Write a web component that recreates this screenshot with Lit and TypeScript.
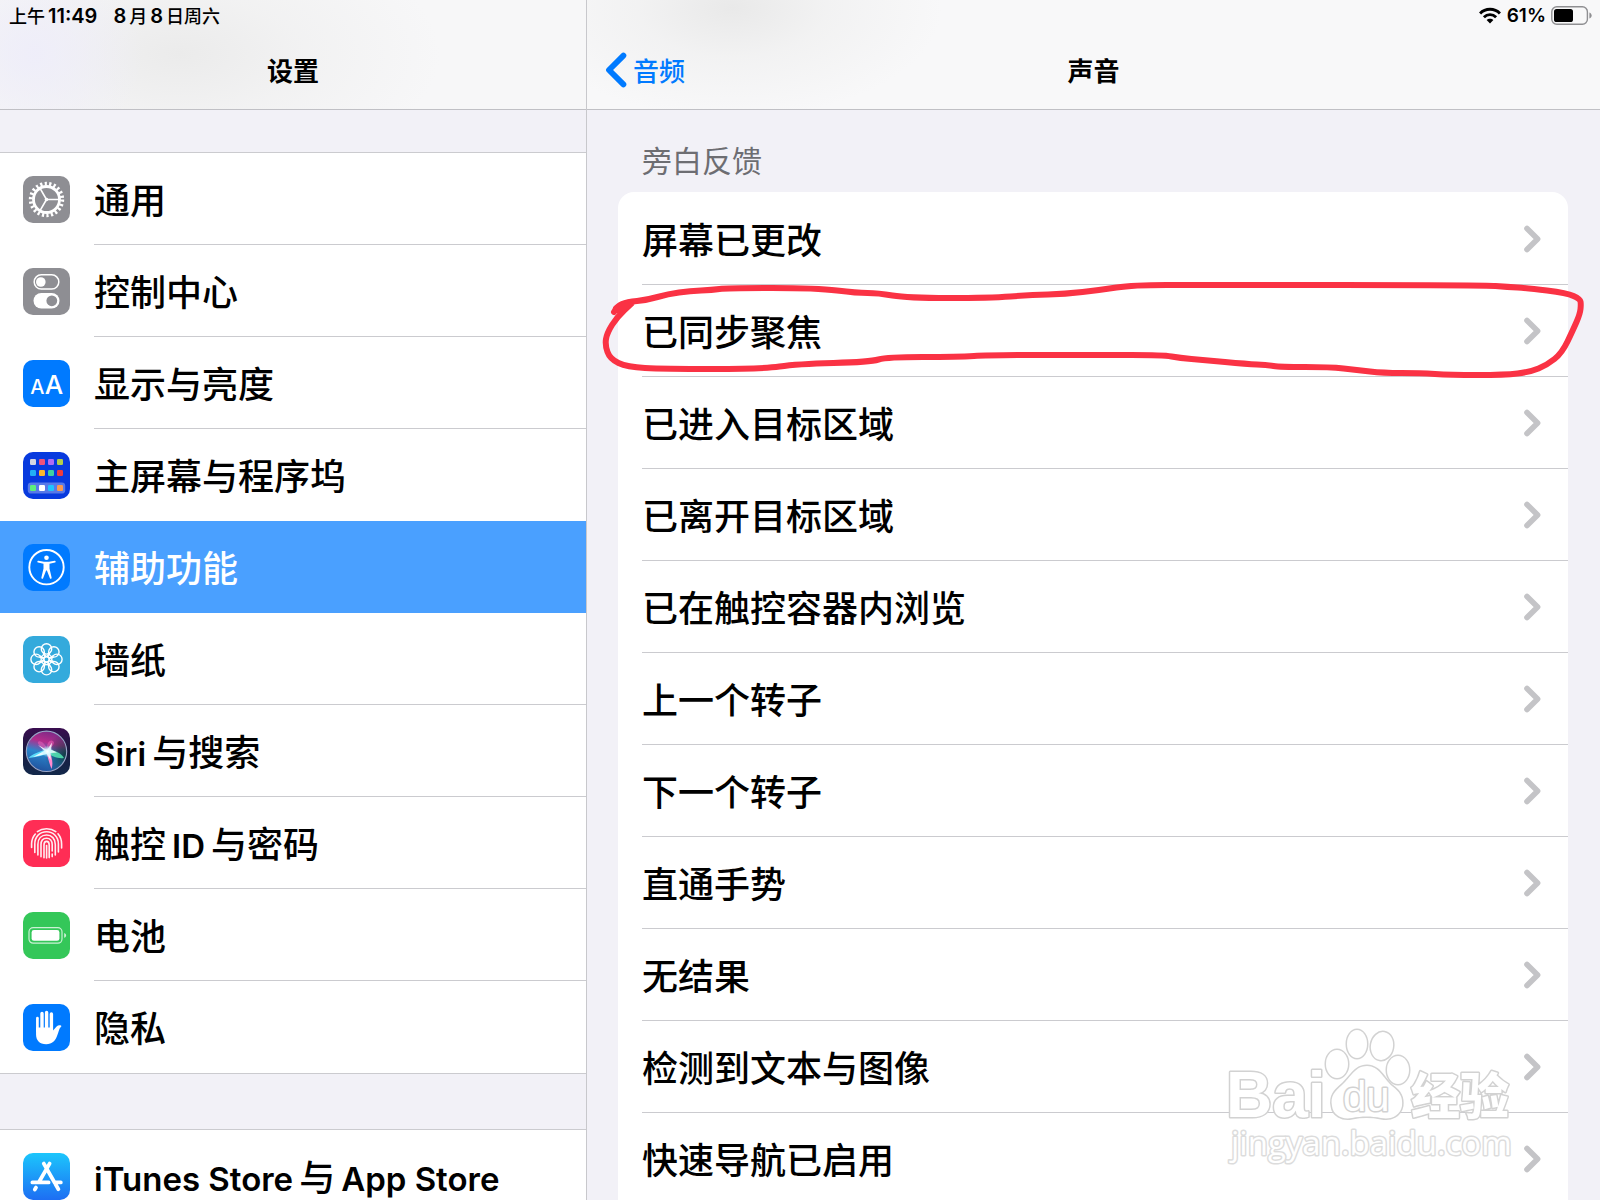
import { LitElement, html, svg, css, nothing } from "lit";
import type { SVGTemplateResult, TemplateResult } from "lit";
import { customElement, property, state } from "lit/decorators.js";
import { classMap } from "lit/directives/class-map.js";

type Point = [number, number];

/** Smooth path that runs through the midpoints of a list of points. */
function strokePath(points: Point[]): string {
  let d = `M${points[0][0]} ${points[0][1]}`;
  for (let i = 1; i < points.length - 1; i++) {
    const [x, y] = points[i];
    const [nx, ny] = points[i + 1];
    d += ` Q${x} ${y} ${(x + nx) / 2} ${(y + ny) / 2}`;
  }
  const last = points[points.length - 1];
  return `${d} L${last[0]} ${last[1]}`;
}

const MARKER: Point[] = [
  [614, 312], [617, 306], [627, 302], [647, 300], [668, 294], [690, 291], [712, 290], [727, 288],
  [817, 288], [857, 293], [878, 293], [907, 298], [990, 298], [1031, 295], [1065, 294], [1100, 290],
  [1133, 285], [1200, 285], [1483, 285], [1508, 287], [1527, 288], [1567, 293], [1580, 299],
  [1581, 304], [1580, 314], [1573, 330], [1562, 353], [1547, 365], [1530, 372], [1505, 375],
  [1450, 375], [1420, 373], [1383, 373], [1357, 370], [1330, 367], [1280, 367], [1267, 365],
  [1247, 364], [1203, 360], [1180, 358], [1163, 355], [1100, 355], [990, 355], [958, 357],
  [887, 357], [870, 362], [797, 364], [762, 369], [663, 369], [627, 367], [610, 359], [605, 345],
  [607, 333], [617, 317], [632, 303],
];

const range = (n: number) => Array.from({ length: n }, (_, i) => i);

const HOME_DOTS: [number, number, string][] = [
  [10, 10, "#d6d6e2"], [19, 10, "#f0527a"], [28, 10, "#b06cf5"], [37, 10, "#b2cf4a"],
  [10, 21, "#22b0f5"], [19, 21, "#fcb92c"], [28, 21, "#3fd0a0"], [37, 21, "#f03c3c"],
  [10, 36, "#5df07c"], [19, 36, "#ffffff"], [28, 36, "#1fc4ff"], [37, 36, "#fb9a50"],
];

const ICONS: Record<string, SVGTemplateResult> = {
  general: svg`
    <rect width="47" height="47" rx="10" fill="#8e8e93"/>
    <g fill="none" stroke="#fff">
      <circle cx="23.5" cy="23.5" r="13" stroke-width="2.8"/>
      <circle cx="23.5" cy="23.5" r="15.8" stroke-width="3.8" stroke-dasharray="2.2 2.31"/>
      <path d="M23.5 23.5H36M23.5 23.5L17.2 12.6M23.5 23.5L17.2 34.4" stroke-width="1.6"/>
    </g>
    <circle cx="23.5" cy="23.5" r="1.8" fill="#fff"/>`,
  control: svg`
    <rect width="47" height="47" rx="10" fill="#8e8e93"/>
    <rect x="11.2" y="6.8" width="24.6" height="14.2" rx="7.1" fill="none" stroke="#fff" stroke-width="1.5"/>
    <circle cx="17.8" cy="14" r="4.8" fill="#fff"/>
    <rect x="10.5" y="25" width="26" height="15.6" rx="7.8" fill="#fff"/>
    <circle cx="28.8" cy="32.8" r="5.4" fill="#8e8e93"/>`,
  display: svg`
    <rect width="47" height="47" rx="10" fill="#007aff"/>
    <g fill="#fff" font-family="Inter, sans-serif" font-weight="500" text-anchor="middle">
      <text x="14.3" y="33.6" font-size="20">A</text>
      <text x="31" y="33.6" font-size="26">A</text>
    </g>`,
  home: svg`
    <rect width="47" height="47" rx="10" fill="#083ade"/>
    <rect x="4.8" y="30.4" width="37.4" height="11.2" rx="3.4" fill="#fff" opacity=".32"/>
    ${HOME_DOTS.map(([x, y, c]) => svg`<rect x=${x - 3} y=${y - 3} width="6" height="6" rx="1.2" fill=${c}/>`)}`,
  access: svg`
    <rect width="47" height="47" rx="10" fill="#007aff"/>
    <circle cx="23.5" cy="23.2" r="17.2" fill="none" stroke="#fff" stroke-width="1.9"/>
    <circle cx="23.5" cy="13.8" r="2.3" fill="#fff"/>
    <path fill="#fff" d="M15.3 16.8L21 17.8H26L31.7 16.8A.8.8 0 0 1 32 18.4L26.5 19.8V24.5L28.6 33.6A.9.9 0 0 1 26.9 34.2L23.9 26.6H23.1L20.1 34.2A.9.9 0 0 1 18.4 33.6L20.5 24.5V19.8L15 18.4A.8.8 0 0 1 15.3 16.8Z"/>`,
  wallpaper: svg`
    <rect width="47" height="47" rx="10" fill="#34aadc"/>
    <g fill="none" stroke="#fff" stroke-width="1.4">
      ${range(8).map((i) => svg`
        <g transform="rotate(${i * 45} 23.5 23.3)">
          <circle cx="23.5" cy="12.9" r="5.2"/>
          <path d="M23.5 20.6C21.4 19.4 20.4 17.6 20.2 16.6M23.5 20.6C25.6 19.4 26.6 17.6 26.8 16.6"/>
        </g>`)}
      <circle cx="23.5" cy="23.3" r="2.6"/>
    </g>`,
  siri: svg`
    <defs>
      <linearGradient id="siri-bg" x1="0" y1="0" x2="0" y2="1">
        <stop offset="0" stop-color="#3a0d50"/><stop offset=".45" stop-color="#1b1a40"/><stop offset="1" stop-color="#12284a"/>
      </linearGradient>
      <linearGradient id="siri-orb" x1=".6" y1="0" x2=".35" y2="1">
        <stop offset="0" stop-color="#7c2a86"/><stop offset=".28" stop-color="#b42c8c"/>
        <stop offset=".55" stop-color="#2a86cc"/><stop offset="1" stop-color="#20509c"/>
      </linearGradient>
      <radialGradient id="siri-right" cx="1" cy=".6" r=".55">
        <stop offset="0" stop-color="#0c3a40"/><stop offset="1" stop-color="#0c3a40" stop-opacity="0"/>
      </radialGradient>
      <radialGradient id="siri-glow">
        <stop offset="0" stop-color="#fff"/><stop offset=".4" stop-color="#d8fbff" stop-opacity=".8"/>
        <stop offset="1" stop-color="#8fe8ff" stop-opacity="0"/>
      </radialGradient>
    </defs>
    <rect width="47" height="47" rx="10" fill="url(#siri-bg)"/>
    <circle cx="23.5" cy="23.3" r="20" fill="url(#siri-orb)"/>
    <circle cx="23.5" cy="23.3" r="20" fill="url(#siri-right)"/>
    <circle cx="23.5" cy="23.3" r="20.2" fill="none" stroke="#9aa6c8" stroke-width="1.1"/>
    <path fill="#e75ab4" opacity=".6" d="M24 23C18 20 13 15 15.5 13.5S24 17 24 23ZM24 23C23 15 27 11 30 13S28 20 24 23Z"/>
    <path fill="#5fe6ff" opacity=".9" d="M24 22C17 23 9 26 5.5 30C13 29 20 28 25 25Z"/>
    <path fill="#56e8b4" opacity=".85" d="M25 22C32 22 38 25 41 30C35 31 28 28 24 25Z"/>
    <path fill="#ff8ad0" d="M23 24C25 29 26 35 28.5 41C30.5 36 29 28 26 23Z"/>
    <path fill="#fff" opacity=".85" d="M24 22L29 14.5L28 21.6L34 24.6L27.4 25L27.6 32L23.8 26L10 29L21.5 22.8L15 17Z"/>
    <circle cx="24.4" cy="23.4" r="6" fill="url(#siri-glow)"/>`,
  touch: svg`
    <rect width="47" height="47" rx="10" fill="#ff2d55"/>
    <g fill="none" stroke="#fff" stroke-width="1.6" stroke-linecap="round" opacity=".92">
      <path d="M14.4 11.6C19.6 7.8 27.6 7.8 32.8 11.6"/>
      <path d="M8.6 27.5V23.5C8.8 19.6 10.2 16.4 12.3 14"/>
      <path d="M35 13.8C37.4 16.6 38.6 20 38.6 24V28"/>
      <path d="M11.8 32.4V24C11.8 16.6 16.8 11.8 23.6 11.8S35.4 17 35.4 24V32"/>
      <path d="M14.9 35V24.4C14.9 18.6 18.4 15 23.6 15S32.3 18.8 32.3 24.4V35"/>
      <path d="M18 36.8V24.6C18 20.6 20.2 18.2 23.6 18.2S29.2 20.8 29.2 24.6V31M29.2 34V36.6"/>
      <path d="M21 37.8V25C21 22.6 22 21.4 23.6 21.4S26.2 22.6 26.2 25V37.6"/>
      <path d="M23.6 25.6V38"/>
    </g>`,
  battery: svg`
    <rect width="47" height="47" rx="10" fill="#34c759"/>
    <rect x="6" y="15.6" width="33" height="15.6" rx="4.2" fill="none" stroke="#fff" stroke-width="1.2" opacity=".75"/>
    <rect x="8.6" y="18" width="27.8" height="10.8" rx="2.4" fill="#fff"/>
    <path d="M41.2 21C43.8 21.8 43.8 25 41.2 25.8Z" fill="#fff" opacity=".75"/>`,
  privacy: svg`
    <rect width="47" height="47" rx="10" fill="#007aff"/>
    <g stroke="#fff" stroke-linecap="round" fill="none">
      <path d="M14.4 14.2V27" stroke-width="2.7"/>
      <path d="M19 9.4V26M23.6 8.4V26M28.4 10V26" stroke-width="3.4"/>
    </g>
    <path fill="#fff" d="M13.05 23.5H30V26.4C31.4 25.4 32.4 23.6 33.6 22.4C35 21.2 37 21 38.2 21.8C38.6 22.2 38.2 22.8 37.6 23.2C36.2 24.4 35.4 28.4 34.2 31.6C32.6 36.6 29.2 40.2 23.2 40.2C16.4 40.2 13.05 36 13.05 30.4Z"/>`,
  store: svg`
    <defs>
      <linearGradient id="store-bg" x1="0" y1="0" x2="0" y2="1">
        <stop offset="0" stop-color="#1cc6fc"/><stop offset="1" stop-color="#1d6ef3"/>
      </linearGradient>
    </defs>
    <rect width="47" height="47" rx="10" fill="url(#store-bg)"/>
    <path d="M26.6 10.6L16 29M20.8 10.6L35.4 36.2M9.4 29.4H25.6M31.6 29.4H37.8M13 34.6L11.8 36.6" fill="none" stroke="#fff" stroke-width="3.8" stroke-linecap="round"/>`,
};

interface NavItem {
  icon: string;
  label: string;
}

const GROUPS: NavItem[][] = [
  [
    { icon: "general", label: "通用" },
    { icon: "control", label: "控制中心" },
    { icon: "display", label: "显示与亮度" },
    { icon: "home", label: "主屏幕与程序坞" },
    { icon: "access", label: "辅助功能" },
    { icon: "wallpaper", label: "墙纸" },
    { icon: "siri", label: "Siri与搜索" },
    { icon: "touch", label: "触控ID与密码" },
    { icon: "battery", label: "电池" },
    { icon: "privacy", label: "隐私" },
  ],
  [{ icon: "store", label: "iTunes Store与App Store" }],
];

const SOUNDS = [
  "屏幕已更改", "已同步聚焦", "已进入目标区域", "已离开目标区域", "已在触控容器内浏览",
  "上一个转子", "下一个转子", "直通手势", "无结果", "检测到文本与图像", "快速导航已启用",
];

/** Splits a label so that Latin runs get their own size and weight. */
function mixed(label: string): (TemplateResult | string)[] {
  return label
    .split(/([A-Za-z][A-Za-z ]*)/)
    .map((s, i) => (i % 2 ? html`<span class=${classMap({ latin: true, lead: label.startsWith(s) })}>${s}</span>` : s));
}

const shared = css`
  :host {
    font-family: Inter, "Noto Sans CJK SC", sans-serif;
    color: #000;
  }
  * {
    box-sizing: border-box;
  }
  button {
    font: inherit;
    color: inherit;
    background: none;
    border: 0;
    padding: 0;
    text-align: left;
    cursor: pointer;
  }
  ul {
    list-style: none;
    margin: 0;
    padding: 0;
  }
  h1,
  h2 {
    margin: 0;
  }
  h1 {
    padding-bottom: 2px;
    font-size: 26px;
    font-weight: 700;
  }
`;

@customElement("settings-row")
class SettingsRow extends LitElement {
  @property() icon = "";
  @property() label = "";
  @property({ type: Boolean }) selected = false;

  static styles = [
    shared,
    css`
      :host {
        display: block;
      }
      .row {
        display: flex;
        align-items: center;
        width: 100%;
        height: 92px;
        padding-left: 23px;
        gap: 24px;
      }
      .icon {
        flex: none;
        width: 47px;
        height: 47px;
      }
      .label {
        flex: 1;
        align-self: stretch;
        display: flex;
        align-items: center;
        padding-bottom: 2px;
        font-size: 36px;
        font-weight: 500;
        white-space: nowrap;
        border-bottom: 1px solid #cbcbcf;
      }
      .latin {
        margin: 0 6px;
        font-size: 33px;
        font-weight: 600;
      }
      .lead {
        margin-left: 0;
      }
      .selected {
        background: #4aa0ff;
        color: #fff;
      }
      :host([flush]) .label,
      .selected .label {
        border-bottom-color: transparent;
      }
    `,
  ];

  render() {
    return html`
      <button class=${classMap({ row: true, selected: this.selected })} aria-current=${this.selected ? "page" : nothing}>
        <svg class="icon" viewBox="0 0 47 47" aria-hidden="true">${ICONS[this.icon]}</svg>
        <span class="label"><span>${mixed(this.label)}</span></span>
      </button>
    `;
  }
}

@customElement("settings-sidebar")
class SettingsSidebar extends LitElement {
  @state() private current = "access";

  static styles = [
    shared,
    css`
      :host {
        display: flex;
        flex-direction: column;
        min-width: 0;
        min-height: 0;
        border-right: 1px solid #c8c8cc;
        background: #f2f1f7;
      }
      .head {
        flex: none;
        border-bottom: 1px solid #c0c0c5;
        background:
          radial-gradient(ellipse 110px 100px at 34px 54px, rgba(238, 237, 250, 0.9), rgba(238, 237, 250, 0.5) 45%, rgba(238, 237, 250, 0)),
          radial-gradient(ellipse 260px 130px at 180px 54px, #ebebeb, rgba(238, 238, 238, 0.6) 45%, rgba(247, 247, 248, 0)),
          #f7f7f8;
      }
      .status {
        display: flex;
        align-items: center;
        height: 31px;
        padding: 0 0 2px 9px;
        gap: 16px;
        font-size: 20px;
        font-weight: 600;
      }
      .status > span {
        display: flex;
        align-items: baseline;
        gap: 3px;
      }
      .cjk {
        font-size: 18px;
        font-weight: 500;
      }
      .bar {
        display: flex;
        align-items: center;
        justify-content: center;
        height: 78px;
      }
      .groups {
        flex: 1;
        min-height: 0;
        overflow: hidden;
        display: flex;
        flex-direction: column;
        gap: 55px;
        padding-top: 42px;
      }
      .group {
        flex: none;
        background: #fff;
        border-top: 1px solid #cbcbcf;
        border-bottom: 1px solid #cbcbcf;
      }
    `,
  ];

  render() {
    return html`
      <header class="head">
        <div class="status">
          <span><span class="cjk">上午</span><span>11:49</span></span>
          <span><span>8</span><span class="cjk">月</span><span>8</span><span class="cjk">日周六</span></span>
        </div>
        <div class="bar"><h1>设置</h1></div>
      </header>
      <nav class="groups" aria-label="设置">
        ${GROUPS.map(
          (items) => html`
            <ul class="group">
              ${items.map(
                (item, i) => html`
                  <li>
                    <settings-row
                      icon=${item.icon}
                      label=${item.label}
                      ?selected=${item.icon === this.current}
                      ?flush=${i === items.length - 1 || items[i + 1].icon === this.current}
                      @click=${() => (this.current = item.icon)}
                    ></settings-row>
                  </li>
                `,
              )}
            </ul>
          `,
        )}
      </nav>
    `;
  }
}

@customElement("sound-pane")
class SoundPane extends LitElement {
  static styles = [
    shared,
    css`
      :host {
        display: flex;
        flex-direction: column;
        min-width: 0;
        min-height: 0;
        background: #f2f1f7;
      }
      .head {
        flex: none;
        border-bottom: 1px solid #c0c0c5;
        background:
          radial-gradient(ellipse 210px 110px at 145px 8px, #e9e9e9, rgba(238, 238, 238, 0.6) 45%, rgba(248, 248, 249, 0)),
          #f8f8f9;
      }
      .status {
        display: flex;
        align-items: center;
        justify-content: flex-end;
        height: 31px;
        padding-right: 8px;
        gap: 5px;
        font-size: 19px;
        font-weight: 600;
      }
      .wifi {
        width: 24px;
        height: 17px;
      }
      .cell {
        width: 41px;
        height: 19px;
      }
      .bar {
        display: grid;
        grid-template-columns: 1fr auto 1fr;
        align-items: center;
        height: 78px;
        padding: 0 18px;
      }
      .back {
        display: flex;
        align-items: center;
        gap: 6px;
        color: #007aff;
        font-size: 26px;
        font-weight: 500;
        text-decoration: none;
      }
      .back span {
        padding-bottom: 2px;
      }
      .back svg {
        width: 22px;
        height: 36px;
      }
      .body {
        flex: 1;
        min-height: 0;
        overflow: hidden;
        padding: 29px 32px 0 31px;
      }
      h2 {
        padding-left: 24px;
        font-size: 30px;
        line-height: 44px;
        font-weight: 400;
        color: #6d6d72;
      }
      .card {
        margin-top: 9px;
        padding: 1px 0 24px;
        border-radius: 16px;
        background: #fff;
      }
      .item {
        position: relative;
        padding-left: 24px;
      }
      .row {
        display: flex;
        align-items: center;
        justify-content: space-between;
        width: 100%;
        height: 92px;
        padding-right: 25px;
        font-size: 36px;
        font-weight: 500;
        border-bottom: 1px solid #cbcbcf;
      }
      .name {
        padding-bottom: 2px;
      }
      .chevron {
        flex: none;
        width: 20px;
        height: 30px;
      }
      .marker {
        position: absolute;
        z-index: 1;
        left: -18px;
        top: -10px;
        width: calc(100% + 36px);
        height: 112px;
        overflow: visible;
        pointer-events: none;
      }
    `,
  ];

  render() {
    return html`
      <header class="head">
        <div class="status">
          <svg class="wifi" viewBox="0 0 24 17" role="img" aria-label="Wi-Fi">
            <g fill="none" stroke="#000" stroke-width="2.9">
              <path d="M2.1 6.4C7.4 .8 16.6 .8 21.9 6.4"/>
              <path d="M5.9 10.2C9.3 6.8 14.7 6.8 18.1 10.2"/>
            </g>
            <path d="M8.6 12.9C10.4 11.2 13.6 11.2 15.4 12.9L12 16.4Z"/>
          </svg>
          <span>61%</span>
          <svg class="cell" viewBox="0 0 41 19" aria-hidden="true">
            <rect x=".8" y=".8" width="35.6" height="17.4" rx="5" fill="none" stroke="#8f8f92" stroke-width="1.4"/>
            <rect x="3" y="3" width="19" height="13" rx="2.6"/>
            <path d="M38.4 6.4C41.4 7.4 41.4 11.6 38.4 12.6Z" fill="#8f8f92"/>
          </svg>
        </div>
        <div class="bar">
          <a class="back" href="#audio">
            <svg viewBox="0 0 22 36" aria-hidden="true">
              <path d="M18.4 3.6L4 18L18.4 32.4" fill="none" stroke="#007aff" stroke-width="5.8" stroke-linecap="round" stroke-linejoin="round"/>
            </svg>
            <span>音频</span>
          </a>
          <h1>声音</h1>
        </div>
      </header>
      <main class="body">
        <h2>旁白反馈</h2>
        <ul class="card">
          ${SOUNDS.map(
            (name, i) => html`
              <li class="item">
                <button class="row">
                  <span class="name">${name}</span>
                  <svg class="chevron" viewBox="0 0 20 30" aria-hidden="true">
                    <path d="M4 4.4L14.6 15L4 25.6" fill="none" stroke="#c4c4c7" stroke-width="5.6" stroke-linecap="round" stroke-linejoin="round"/>
                  </svg>
                </button>
                ${i === 1
                  ? html`<svg class="marker" viewBox="600 275 986 112" preserveAspectRatio="none" aria-hidden="true">
                      <path d=${strokePath(MARKER)} fill="none" stroke="#fa3244" stroke-width="6" stroke-linecap="round" stroke-linejoin="round" vector-effect="non-scaling-stroke"/>
                      <path d="M617 309L628 304" fill="none" stroke="#fa3244" stroke-width="8" stroke-linecap="round"/>
                    </svg>`
                  : nothing}
              </li>
            `,
          )}
        </ul>
      </main>
    `;
  }
}

@customElement("site-watermark")
class SiteWatermark extends LitElement {
  static styles = css`
    :host {
      display: block;
      width: 300px;
      height: 150px;
      pointer-events: none;
    }
    .mark {
      display: block;
      width: 100%;
      height: 100%;
    }
    .shape {
      fill: #fff;
      stroke: #d2d2d2;
      stroke-width: 3;
      stroke-linejoin: round;
      paint-order: stroke;
    }
    .latin {
      font: 700 64px "Liberation Sans", sans-serif;
    }
    .du {
      font: 400 42px "Liberation Sans", sans-serif;
    }
    .han {
      font: 900 49px "Noto Sans CJK SC", sans-serif;
    }
    .site {
      font: 400 33px "Open Sans", sans-serif;
      stroke: #dcdcdc;
    }
  `;

  render() {
    return html`
      <svg class="mark" viewBox="1220 1020 300 150">
        <text class="shape latin" x="1226" y="1117">Bai</text>
        <ellipse class="shape" cx="1337" cy="1064" rx="11" ry="14"/>
        <ellipse class="shape" cx="1357" cy="1044" rx="10" ry="14"/>
        <ellipse class="shape" cx="1382" cy="1046" rx="11" ry="14" transform="rotate(10 1382 1046)"/>
        <ellipse class="shape" cx="1398" cy="1070" rx="11" ry="14"/>
        <path class="shape" d="M1367 1066C1379 1066 1383 1078 1392 1086C1400 1092 1403 1097 1402 1106C1400 1116 1391 1120 1381 1118C1371 1116 1362 1116 1352 1118C1342 1120 1333 1115 1332 1106C1330 1096 1335 1091 1342 1085C1351 1077 1355 1066 1367 1066Z"/>
        <text class="shape du" x="1343" y="1111">du</text>
        <text class="shape han" x="1411" y="1114">经验</text>
        <text class="shape site" x="1231" y="1155">jingyan.baidu.com</text>
      </svg>
    `;
  }
}

@customElement("app-root")
class AppRoot extends LitElement {
  static styles = css`
    :host {
      position: relative;
      display: grid;
      grid-template-columns: 587fr 1013fr;
      grid-template-rows: minmax(0, 1fr);
      height: 100vh;
      overflow: hidden;
      background: #f2f1f7;
    }
    .watermark {
      position: absolute;
      right: 80px;
      bottom: 30px;
    }
  `;

  render() {
    return html`
      <settings-sidebar></settings-sidebar>
      <sound-pane></sound-pane>
      <site-watermark class="watermark"></site-watermark>
    `;
  }
}
